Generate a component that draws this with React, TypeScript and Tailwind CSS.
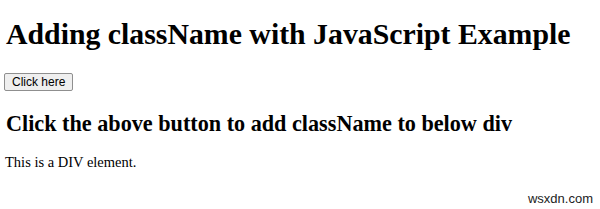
import React from 'react';

const App: React.FC = () => {
  return (
    <div className="relative w-[600px] h-[209px] bg-white overflow-hidden px-[6px] text-black font-['Liberation_Serif',serif]">
      <h1 className="pt-[19px] text-[29.8px] leading-[30px] font-bold">
        Adding className with JavaScript Example
      </h1>

      <button className="-ml-[2px] mt-[24px] h-[18px] px-[7px] border border-[#8f8f8f] rounded-[2px] bg-[#efefef] text-[12px] leading-none text-black font-['Liberation_Sans',sans-serif]">
        Click here
      </button>

      <h2 className="mt-[18px] text-[22.2px] leading-[26px] font-bold">
        Click the above button to add className to below div
      </h2>

      <div className="-ml-px mt-[16px] text-[14.5px] leading-[18px]">This is a DIV element.</div>

      {/* watermark */}
      <span className="absolute right-[7px] bottom-[4px] text-[13px] leading-none text-[#222] font-['Liberation_Sans',sans-serif]">
        wsxdn.com
      </span>
    </div>
  );
};

export default App;
